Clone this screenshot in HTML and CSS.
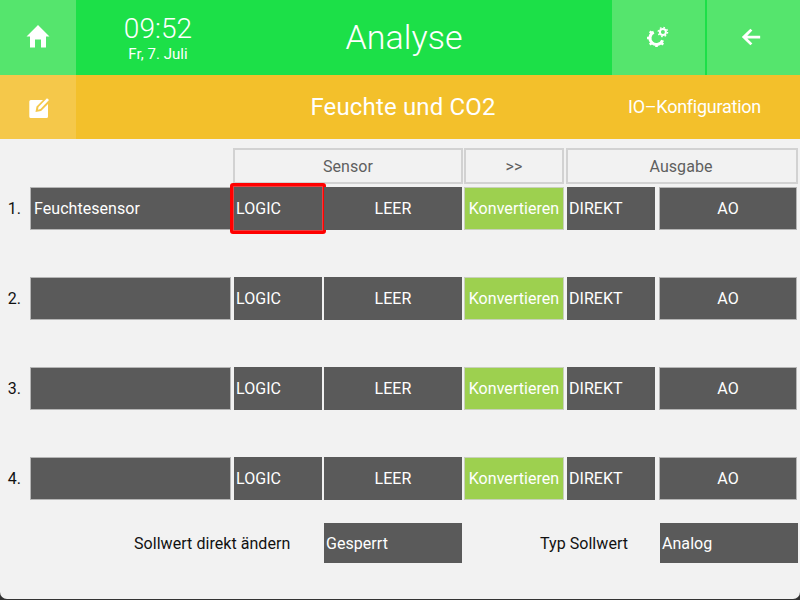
FILE: index.html
```html
<!DOCTYPE html>
<html lang="de">
<head>
<meta charset="utf-8">
<title>Analyse</title>
<link rel="stylesheet" href="styles.css">
</head>
<body>
<div class="app">
  <header class="topbar">
    <div class="tile tile-home">
      <svg class="icon icon-home" viewBox="0 0 24 24"><path d="M12 1 0.5 12.500H4V23.500H9V15.500H15V23.500H20V12.500H23.500Z"/></svg>
    </div>
    <div class="clock">
      <div class="time">09:52</div>
      <div class="date">Fr, 7. Juli</div>
    </div>
    <div class="title">Analyse</div>
    <div class="tile tile-gear">
      <svg class="icon gear" viewBox="0 0 24 24">
        <path class="gear-ring" d="M7.750 7.100A6.500 6.500 0 1 0 16.600 15.200"/>
        <path class="gear-teeth" d="M3 13H1M5.200 18.300 3.800 19.700M10.500 20.500V22M15.800 18.300 17.200 19.700M5.200 7.700 3.800 6.300"/>
        <circle class="gear-small" cx="16.900" cy="7" r="3"/>
        <circle class="gear-small-teeth" cx="16.900" cy="7" r="4.600"/>
      </svg>
    </div>
    <div class="tile tile-back">
      <svg class="icon icon-back" viewBox="0 0 24 24"><path d="M22 10.500H8L13.500 5 11.300 3 2 12l9.300 9 2.200-2L8 13.500h14z"/></svg>
    </div>
  </header>
  <div class="subbar">
    <div class="tile-edit">
      <svg class="icon icon-edit" viewBox="0 0 24 24"><path d="M3.800 4H16L9.500 10.500 8.500 16 14 15 21 8V20.500a1.500 1.500 0 0 1-1.500 1.500H3.800a1.500 1.500 0 0 1-1.500-1.500V5.500A1.500 1.500 0 0 1 3.800 4Z"/><path d="M20 2.200 22 4 13.500 13 11 13.800 11.500 11Z"/></svg>
    </div>
    <div class="subtitle">Feuchte und CO2</div>
    <div class="sublink">IO–Konfiguration</div>
  </div>
  <main class="content">
    <div class="grid head">
      <div class="head-cell head-sensor">Sensor</div>
      <div class="head-cell head-arrow">&gt;&gt;</div>
      <div class="head-cell head-out">Ausgabe</div>
    </div>
    <div class="grid row">
      <div class="num">1.</div>
      <div class="cell name left framed">Feuchtesensor</div>
      <div class="cell logic left">LOGIC<span class="highlight"></span></div>
      <div class="cell leer">LEER</div>
      <div class="cell conv framed">Konvertieren</div>
      <div class="cell direkt left">DIREKT</div>
      <div class="cell ao framed">AO</div>
    </div>
    <div class="grid row">
      <div class="num">2.</div>
      <div class="cell name left framed"></div>
      <div class="cell logic left">LOGIC</div>
      <div class="cell leer">LEER</div>
      <div class="cell conv framed">Konvertieren</div>
      <div class="cell direkt left">DIREKT</div>
      <div class="cell ao framed">AO</div>
    </div>
    <div class="grid row">
      <div class="num">3.</div>
      <div class="cell name left framed"></div>
      <div class="cell logic left">LOGIC</div>
      <div class="cell leer">LEER</div>
      <div class="cell conv framed">Konvertieren</div>
      <div class="cell direkt left">DIREKT</div>
      <div class="cell ao framed">AO</div>
    </div>
    <div class="grid row row-last">
      <div class="num">4.</div>
      <div class="cell name left framed"></div>
      <div class="cell logic left">LOGIC</div>
      <div class="cell leer">LEER</div>
      <div class="cell conv framed">Konvertieren</div>
      <div class="cell direkt left">DIREKT</div>
      <div class="cell ao framed">AO</div>
    </div>
    <div class="settings">
      <div class="label label-a">Sollwert direkt ändern</div>
      <div class="field field-a">Gesperrt</div>
      <div class="label label-b">Typ Sollwert</div>
      <div class="field field-b">Analog</div>
    </div>
  </main>
</div>
</body>
</html>
```
FILE: styles.css
```css
* { box-sizing: border-box; }
html, body { margin: 0; height: 600px; overflow: hidden; }
body { background: #333333; font-family: Roboto, "Liberation Sans", sans-serif; font-size: 16px; letter-spacing: 0.05px; color: #111111; }
.app { height: 599px; background: #f2f2f2; border-radius: 0 0 7px 7px; overflow: hidden; display: flex; flex-direction: column; }

.topbar { height: 75px; display: flex; align-items: stretch; background: #1ce048; color: #ffffff; }
.tile { display: flex; align-items: center; justify-content: center; background: #55e56d; }
.tile-home { width: 76px; padding-bottom: 4px; }
.tile-gear { width: 93px; padding-right: 1px; padding-bottom: 1px; }
.tile-back { width: 93px; margin-left: 2px; padding-right: 5px; padding-bottom: 1px; }
.icon { width: 24px; height: 24px; fill: #ffffff; display: block; }
.icon-back { width: 22px; height: 22px; }
.gear-ring { fill: none; stroke: #ffffff; stroke-width: 3; }
.gear-teeth { fill: none; stroke: #ffffff; stroke-width: 2.6; }
.gear-small { fill: none; stroke: #ffffff; stroke-width: 2; }
.gear-small-teeth { fill: none; stroke: #ffffff; stroke-width: 1.5; stroke-dasharray: 1.6 2; }
.clock { width: 164px; display: flex; flex-direction: column; align-items: center; padding-top: 13px; }
.time { font-size: 28px; font-weight: 300; line-height: 32px; }
.date { font-size: 15px; line-height: 18px; }
.title { flex: 1; font-size: 34px; font-weight: 300; line-height: 74px; text-align: center; padding-right: 44px; }

.subbar { height: 64px; display: flex; align-items: center; background: #f3c02b; color: #ffffff; }
.tile-edit { width: 76px; height: 64px; background: #f5c84a; display: flex; align-items: center; justify-content: center; padding: 2px 0 0 2px; }
.subtitle { width: 654px; font-size: 24px; letter-spacing: 0.15px; text-align: center; }
.sublink { font-size: 18px; font-weight: 400; letter-spacing: -0.25px; margin-left: -102px; margin-top: -2px; white-space: nowrap; }

.content { flex: 1; padding-top: 9px; }
.grid { display: grid; grid-template-columns: 30px 204px 90px 140px 103px 92px 141px; align-items: stretch; }
.head { height: 36px; margin-bottom: 3px; }
.row { height: 43px; margin-bottom: 47px; }
.row-last { margin-bottom: 23px; }

.head-cell { border: 2px solid #d2d2d2; color: #5f5f5f; display: flex; align-items: center; justify-content: center; }
.head-sensor { grid-column: 3 / 5; margin-left: -1px; margin-right: 1px; }
.head-arrow { grid-column: 5; margin-right: 3px; }
.head-out { grid-column: 6 / 8; margin-left: -1px; margin-right: 2px; padding-right: 2px; }

.num { display: flex; align-items: center; justify-content: flex-end; padding-right: 9px; color: #111111; }
.cell { background: #5a5a5a; color: #ffffff; display: flex; align-items: center; justify-content: center; position: relative; white-space: nowrap; }
.left { justify-content: flex-start; padding-left: 2px; }
.framed { border: 1px solid #b5b5b5; }
.name { margin-right: 3px; padding-left: 3px; }
.logic { margin-right: 2px; }
.leer { margin-right: 2px; }
.conv { margin-right: 3px; background: #9dd04f; border-color: #c8d0bb; }
.direkt { margin-right: 4px; }
.ao { margin-right: 3px; }
.highlight { position: absolute; left: -4px; top: -4px; width: 96px; height: 51px; border: 3px solid #ff0000; border-radius: 3px; box-shadow: inset 0 0 0 1px #e84040; }

.settings { display: flex; height: 40px; align-items: stretch; }
.label { display: flex; align-items: center; }
.label-a { width: 324px; padding-left: 134px; }
.label-b { width: 198px; padding-left: 78px; }
.field { background: #5a5a5a; color: #ffffff; display: flex; align-items: center; padding-left: 2px; width: 138px; }
```
